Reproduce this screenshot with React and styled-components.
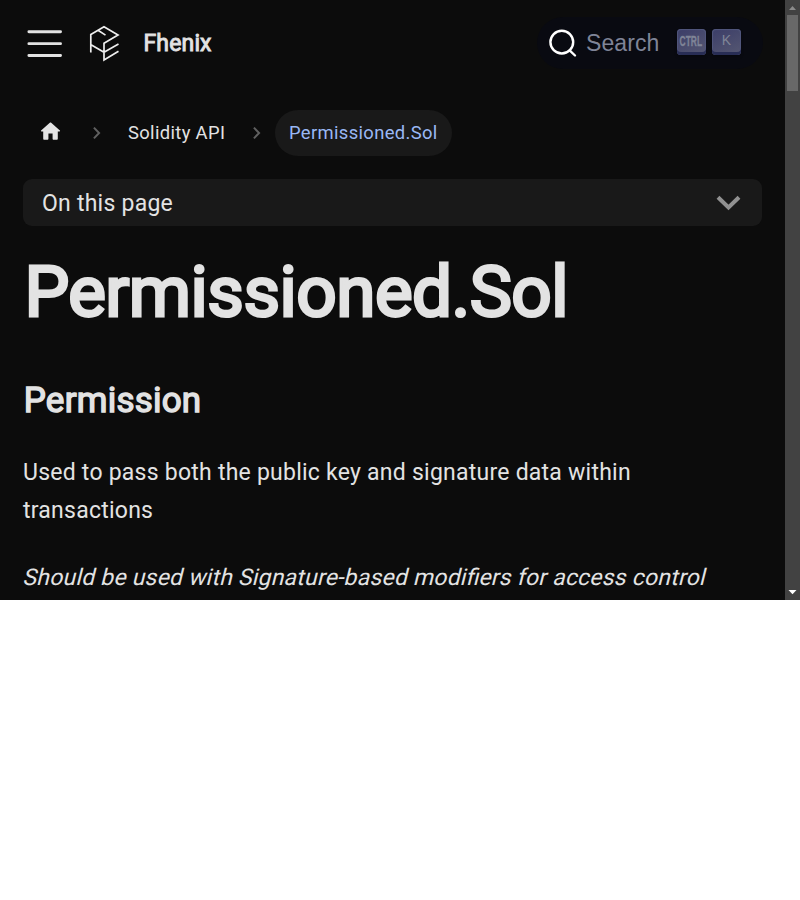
import React from 'react';
import styled, { createGlobalStyle } from 'styled-components';

const GlobalStyle = createGlobalStyle`
  * { box-sizing: border-box; }
  body { margin: 0; background: #fff; }
`;

const Viewport = styled.div`
  display: flex;
  width: 800px;
  height: 600px;
  overflow: hidden;
  background: #0c0c0c;
  color: #e3e3e3;
  font: 400 23px/38px Roboto, sans-serif;
  letter-spacing: 0.24px;
`;

const Page = styled.div`
  width: 785px;
  height: 600px;
  overflow: hidden;
`;

const Navbar = styled.header`
  display: flex;
  align-items: center;
  height: 86px;
  padding: 0 22px 0 23px;
`;

const MenuIcon = styled.svg`
  width: 43px;
  height: 43px;
  margin-top: 1px;
`;

const Logo = styled.svg`
  width: 32px;
  height: 40px;
  margin-left: 22px;
`;

const Brand = styled.span`
  margin: 2px 0 0 23.5px;
  letter-spacing: 0.15px;
  -webkit-text-stroke: 0.9px #e3e3e3;
`;

const Search = styled.div`
  display: flex;
  align-items: center;
  width: 226px;
  height: 52px;
  margin-left: auto;
  padding: 0 22px 0 11px;
  border-radius: 26px;
  background: #090a11;
  color: #7f8497;
  letter-spacing: 0;
`;

const SearchIcon = styled.svg`
  width: 29px;
  height: 29px;
`;

const SearchLabel = styled.span`
  margin: 0 auto 0 9px;
  font: 23px/28px 'Liberation Sans', sans-serif;
  letter-spacing: 0.1px;
`;

const Key = styled.kbd`
  display: flex;
  justify-content: center;
  width: 29px;
  height: 26px;
  margin: -3px 0 0 6px;
  padding-bottom: 3px;
  border-radius: 4px;
  background: linear-gradient(-26.5deg, #565872, #3b3d68);
  box-shadow: inset 0 -3px 0 #282d55, inset 0 0 1px 1px #51577d, 0 2px 3px rgba(3, 4, 9, 0.3);
  color: #7f8497;
  font: 14px/23px 'Liberation Sans', sans-serif;
`;

const Condensed = styled.span`
  flex: none;
  font: 700 14.5px/25px 'Liberation Sans', sans-serif;
  transform: translateX(-0.5px) scaleX(0.58);
  -webkit-text-stroke: 0.3px #7f8497;
`;

const Breadcrumbs = styled.nav`
  display: flex;
  align-items: center;
  height: 46px;
  margin: 24px 0 0 23px;
  font-size: 18.4px;
  letter-spacing: 0.35px;
`;

const Crumb = styled.span`
  display: flex;
  align-items: center;
  height: 46px;
  padding: 0 14.5px 0 14px;
  border-radius: 23px;
  color: ${(p) => (p.$active ? '#9ab8f5' : '#e3e3e3')};
  background: ${(p) => (p.$active ? '#191919' : 'transparent')};
`;

const HomeCrumb = styled(Crumb)`
  padding: 0 13px 3px 15px;
`;

const HomeIcon = styled.svg`
  width: 25px;
  height: 25px;
`;

const Separator = styled.svg`
  width: 14px;
  height: 14px;
  margin: 0 11.5px 0 ${(p) => p.$gap}px;
`;

const TocButton = styled.div`
  display: flex;
  align-items: center;
  justify-content: space-between;
  height: 47px;
  margin: 23px 23px 0;
  padding: 2px 21px 0 19px;
  border-radius: 9px;
  background: #191919;
`;

const TocArrow = styled.svg`
  width: 25px;
  height: 18px;
  margin-top: -1px;
`;

const Article = styled.main`
  padding: 0 23px;
`;

const Title = styled.h1`
  margin: 22px 0 0 1.4px;
  font-size: 71px;
  font-weight: 400;
  line-height: 88px;
  letter-spacing: -0.53px;
  -webkit-text-stroke: 3px #e3e3e3;
`;

const Subtitle = styled.h2`
  margin: 43px 0 0 0.8px;
  font-size: 35px;
  font-weight: 400;
  line-height: 44px;
  letter-spacing: 0.22px;
  -webkit-text-stroke: 1.4px #e3e3e3;
`;

const Paragraph = styled.p`
  max-width: 720px;
  margin: ${(p) => p.$top}px 0 0;
`;

const Slanted = styled.em`
  display: inline-block;
  margin-left: 1px;
  font-style: normal;
  letter-spacing: 0.2px;
  white-space: nowrap;
  transform: skewX(-14deg);
`;

const Ligature = styled.span`
  letter-spacing: 0;
`;

const Scrollbar = styled.div`
  display: flex;
  flex-direction: column;
  align-items: center;
  width: 15px;
  height: 600px;
  background: #424242;
`;

const ScrollArrow = styled.svg`
  width: 15px;
  height: 15px;
  flex: none;
`;

const ScrollThumb = styled.div`
  width: 11px;
  height: 76px;
  margin-bottom: auto;
  background: #686868;
`;

const Chevron = ({ gap }) => (
  <Separator $gap={gap} viewBox="0 0 14 14" fill="none" stroke="#606060" strokeWidth="2">
    <path d="M4.9 1.6 10.1 7l-5.2 5.4" />
  </Separator>
);

export default function App() {
  return (
    <>
      <GlobalStyle />
      <Viewport>
        <Page>
          <Navbar>
            <MenuIcon viewBox="0 0 30 30" stroke="#e3e3e3" strokeWidth="2" strokeLinecap="round">
              <path d="M4.1 6.8h22.1M4.1 15.1h22.1M4.1 23.4h22.1" />
            </MenuIcon>
            <Logo viewBox="0 0 32 40" fill="none" stroke="#eee" strokeWidth="1.7">
              <path d="M2.8 29.5V11.5L16 3.8l14 8.2-14 8.2V37l14.5-8.8M10 7.3l7.5 4.8M2.6 21.4 16 29.2l14.5-8.2" />
            </Logo>
            <Brand>Fhenix</Brand>
            <Search>
              <SearchIcon viewBox="0 0 29 29" fill="none" stroke="#fff" strokeWidth="2.4" strokeLinecap="round">
                <circle cx="13.8" cy="13.1" r="11.4" />
                <path d="m21.6 21.4 5.4 5.1" />
              </SearchIcon>
              <SearchLabel>Search</SearchLabel>
              <Key><Condensed>CTRL</Condensed></Key>
              <Key>K</Key>
            </Search>
          </Navbar>
          <Breadcrumbs>
            <HomeCrumb>
              <HomeIcon viewBox="0 0 24 24" fill="#e3e3e3">
                <path d="M10 19v-5h4v5c0 .55.45 1 1 1h3c.55 0 1-.45 1-1v-7h1.7c.46 0 .68-.57.33-.87L12.67 3.6c-.38-.34-.96-.34-1.34 0l-8.36 7.53c-.34.3-.13.87.33.87H5v7c0 .55.45 1 1 1h3c.55 0 1-.45 1-1z" />
              </HomeIcon>
            </HomeCrumb>
            <Chevron gap={12.5} />
            <Crumb>Solidity API</Crumb>
            <Chevron gap={9.7} />
            <Crumb $active>Permissioned.Sol</Crumb>
          </Breadcrumbs>
          <TocButton>
            On this page
            <TocArrow viewBox="0 0 25 18" fill="none" stroke="#919191" strokeWidth="4">
              <path d="m2 3.2 10.5 10.3L23 3.2" />
            </TocArrow>
          </TocButton>
          <Article>
            <Title>Permissioned.Sol</Title>
            <Subtitle>Permission</Subtitle>
            <Paragraph $top={31}>
              Used to pass both the public key and signature data within transactions
            </Paragraph>
            <Paragraph $top={29}>
              <Slanted>
                Should be used with Signature-based modi<Ligature>fi</Ligature>ers for access control
              </Slanted>
            </Paragraph>
          </Article>
        </Page>
        <Scrollbar>
          <ScrollArrow viewBox="0 0 15 15" fill="#8b8b8b"><path d="M4 10h7L7.5 6z" /></ScrollArrow>
          <ScrollThumb />
          <ScrollArrow viewBox="0 0 15 15" fill="#fff"><path d="M3.5 5h8L7.5 9.2z" /></ScrollArrow>
        </Scrollbar>
      </Viewport>
    </>
  );
}
